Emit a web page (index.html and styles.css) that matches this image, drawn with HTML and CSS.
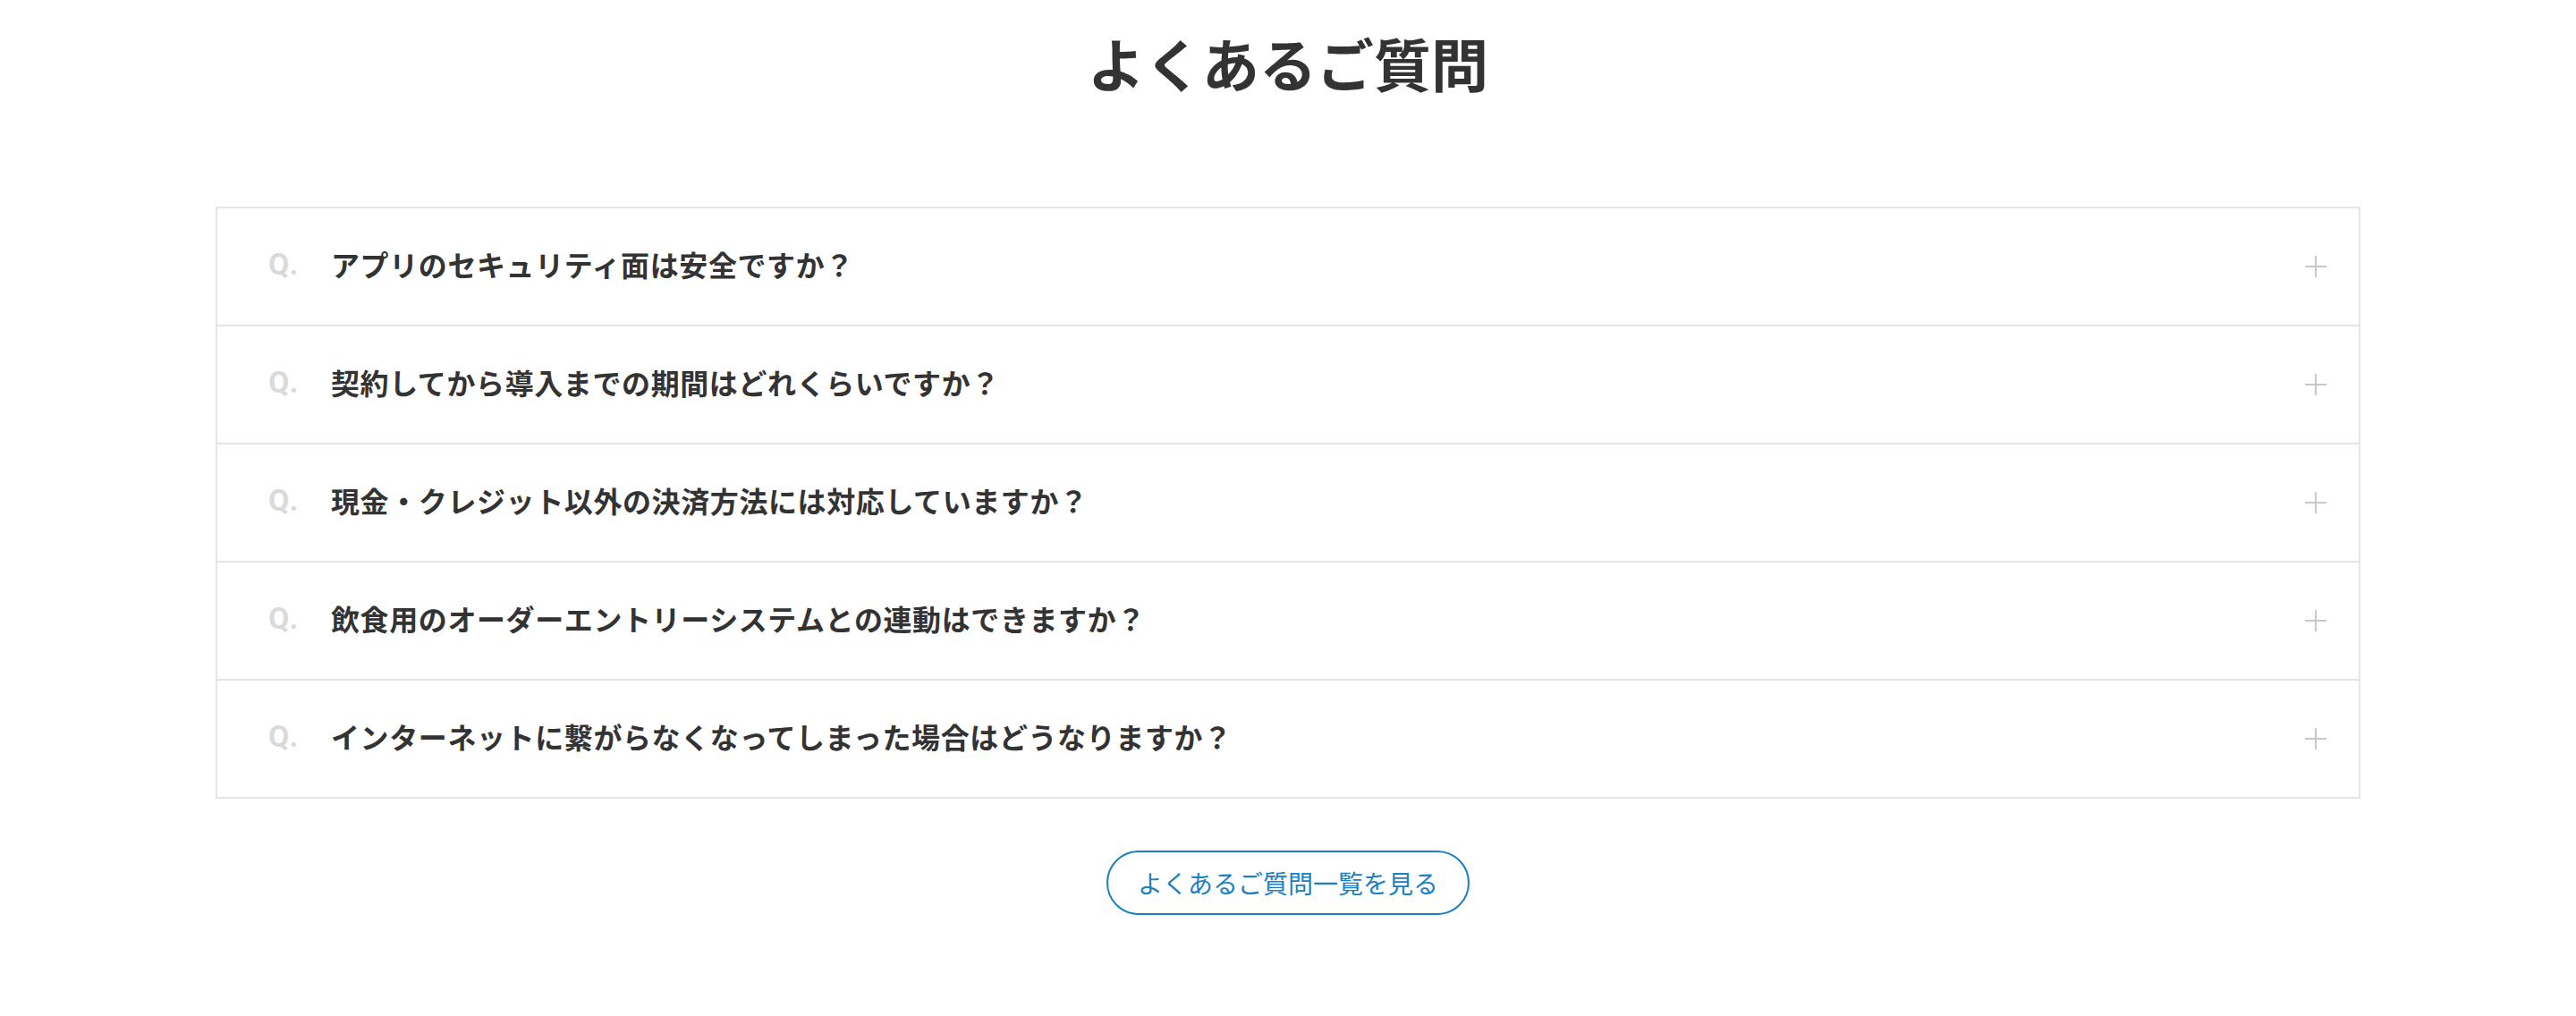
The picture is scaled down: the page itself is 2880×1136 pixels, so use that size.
FILE: index.html
```html
<!DOCTYPE html>
<html lang="ja">

<head>
    <meta charset="UTF-8">
    <title>よくあるご質問</title>

    <link rel="stylesheet" href="styles.css">
</head>

<body>
    <section class="faq">
        <h1 class="faq-title">よくあるご質問</h1>

        <ul class="faq-list">
            <li class="faq-item">
                <span class="faq-q">Q.</span>
                <span class="faq-text">アプリのセキュリティ面は安全ですか？</span>
                <span class="faq-plus"></span>
            </li>
            <li class="faq-item">
                <span class="faq-q">Q.</span>
                <span class="faq-text">契約してから導入までの期間はどれくらいですか？</span>
                <span class="faq-plus"></span>
            </li>
            <li class="faq-item">
                <span class="faq-q">Q.</span>
                <span class="faq-text">現金・クレジット以外の決済方法には対応していますか？</span>
                <span class="faq-plus"></span>
            </li>
            <li class="faq-item">
                <span class="faq-q">Q.</span>
                <span class="faq-text">飲食用のオーダーエントリーシステムとの連動はできますか？</span>
                <span class="faq-plus"></span>
            </li>
            <li class="faq-item">
                <span class="faq-q">Q.</span>
                <span class="faq-text">インターネットに繋がらなくなってしまった場合はどうなりますか？</span>
                <span class="faq-plus"></span>
            </li>
        </ul>

        <div class="faq-more">
            <a class="more-button" href="#">よくあるご質問一覧を見る</a>
        </div>
    </section>
</body>

</html>
```

FILE: styles.css
```css
body {
    font-family: "Noto Sans CJK JP", "Noto Sans", sans-serif;
    background-color: #fff;
    color: #333;
    margin: 0;
}

.faq {
    padding-top: 21px;
}

.faq-title {
    margin: 0;
    font-size: 64px;
    line-height: 96px;
    font-weight: 700;
    text-align: center;
    color: #333;
}

.faq-list {
    list-style: none;
    width: 2394px;
    margin: 114px auto 0;
    padding: 0;
    border: 2px solid #e5e5e5;
}

.faq-item {
    display: flex;
    align-items: center;
    height: 130px;
    padding: 0 36px 0 57px;
    border-bottom: 2px solid #e5e5e5;
}

.faq-item:last-child {
    border-bottom: none;
}

.faq-q {
    width: 70px;
    flex-shrink: 0;
    padding-bottom: 6px;
    font-family: Roboto, "Liberation Sans", sans-serif;
    font-size: 34px;
    font-weight: 700;
    color: #dadada;
}

.faq-text {
    flex: 1;
    padding-bottom: 6px;
    font-size: 32px;
    font-weight: 700;
    letter-spacing: 0.6px;
}

.faq-plus {
    position: relative;
    width: 24px;
    height: 24px;
    flex-shrink: 0;
}

.faq-plus::before,
.faq-plus::after {
    content: "";
    position: absolute;
    background-color: #c8c8c8;
}

.faq-plus::before {
    left: 0;
    top: 11px;
    width: 24px;
    height: 2px;
}

.faq-plus::after {
    left: 11px;
    top: 0;
    width: 2px;
    height: 24px;
}

.faq-more {
    display: flex;
    justify-content: center;
    margin-top: 58px;
}

.more-button {
    display: block;
    padding: 0 33px;
    line-height: 68px;
    font-size: 28px;
    color: #1a80c4;
    text-decoration: none;
    border: 2px solid #1a80c4;
    border-radius: 40px;
}
```
